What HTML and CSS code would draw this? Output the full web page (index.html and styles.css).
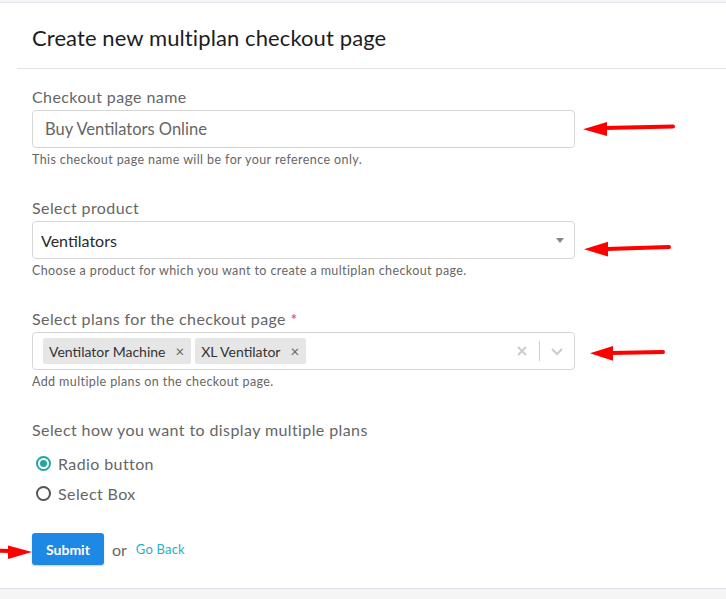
FILE: index.html
```html
<!DOCTYPE html>
<html lang="en">
<head>
    <meta charset="UTF-8">
    <title>Create new multiplan checkout page</title>
    <link rel="stylesheet" href="styles.css">
</head>
<body>

    <div class="page">
        <div class="panel">
            <div class="panel-header">
                <h1>Create new multiplan checkout page</h1>
            </div>

            <form class="panel-body">
                <div class="field">
                    <label>Checkout page name</label>
                    <input type="text" class="text-input" value="Buy Ventilators Online">
                    <p class="help">This checkout page name will be for your reference only.</p>
                </div>

                <div class="field">
                    <label>Select product</label>
                    <div class="select-box">
                        <span>Ventilators</span>
                        <span class="caret"></span>
                    </div>
                    <p class="help">Choose a product for which you want to create a multiplan checkout page.</p>
                </div>

                <div class="field">
                    <label>Select plans for the checkout page <span class="required">*</span></label>
                    <div class="multi-select">
                        <div class="tags">
                            <span class="tag">Ventilator Machine <span class="tag-x">&times;</span></span>
                            <span class="tag">XL Ventilator <span class="tag-x">&times;</span></span>
                        </div>
                        <div class="indicators">
                            <svg width="14" height="14" viewBox="0 0 14 14">
                                <path d="M3 3 L11 11 M11 3 L3 11" stroke="#cccccc" stroke-width="2" />
                            </svg>
                            <span class="sep"></span>
                            <svg width="14" height="14" viewBox="0 0 14 14">
                                <path d="M2 5 L7 10 L12 5" stroke="#cccccc" stroke-width="2" fill="none" />
                            </svg>
                        </div>
                    </div>
                    <p class="help">Add multiple plans on the checkout page.</p>
                </div>

                <div class="field">
                    <label>Select how you want to display multiple plans</label>
                    <div class="radio-row">
                        <span class="radio checked"></span> Radio button
                    </div>
                    <div class="radio-row">
                        <span class="radio"></span> Select Box
                    </div>
                </div>

                <div class="actions">
                    <button type="button" class="btn-submit">Submit</button>
                    <span class="or">or</span>
                    <a href="#" class="go-back">Go Back</a>
                </div>
            </form>
        </div>

        <!-- red annotation arrows -->
        <svg class="arrows" width="726" height="599" viewBox="0 0 726 599">
            <g fill="#ff0000" stroke="#ff0000" stroke-linecap="round">
                <line x1="604" y1="128" x2="673" y2="126.5" stroke-width="4" />
                <polygon points="583,129.3 607,122 607,136" stroke="none" />

                <line x1="606" y1="249" x2="669" y2="247" stroke-width="4" />
                <polygon points="584,249.3 608,241.7 608,256.5" stroke="none" />

                <line x1="611" y1="353" x2="663" y2="352" stroke-width="4" />
                <polygon points="590,353.3 613,346 613,360.7" stroke="none" />

                <line x1="-4" y1="550.5" x2="10" y2="551" stroke-width="4" />
                <polygon points="32,552 8,545.5 8,559" stroke="none" />
            </g>
        </svg>
    </div>

</body>
</html>
```

FILE: styles.css
```css
body {
    margin: 0;
    background-color: #f5f5f5;
    font-family: Lato, "Open Sans", Arial, sans-serif;
}

.page {
    position: relative;
    margin-top: 2px;
    height: 585px;
    background-color: #ffffff;
    border-top: 1px solid #dde3e8;
    border-bottom: 1px solid #dde3e8;
}

.panel {
    margin-left: 17px;
}

.panel-header {
    height: 62px;
    padding: 3px 0 0 15px;
    border-bottom: 1px solid #e2e5e8;
    display: flex;
    align-items: center;
}

.panel-header h1 {
    margin: 0;
    font-size: 22px;
    font-weight: 400;
    letter-spacing: 0.1px;
    color: #1d1d1d;
}

.panel-body {
    padding: 18px 15px 0;
    width: 543px;
}

.field {
    margin-bottom: 31px;
}

.field label {
    display: block;
    height: 20px;
    line-height: 20px;
    font-size: 16px;
    letter-spacing: 0.4px;
    color: #666666;
    margin-bottom: 3px;
}

.required {
    color: #e53935;
}

.text-input {
    box-sizing: border-box;
    display: block;
    width: 100%;
    height: 38px;
    padding: 0 12px;
    border: 1px solid #d6d6d6;
    border-radius: 4px;
    font-family: inherit;
    font-size: 16.5px;
    color: #666666;
    outline: none;
}

.help {
    margin: 5px 0 0;
    height: 14px;
    line-height: 14px;
    font-size: 12.5px;
    letter-spacing: 0.4px;
    color: #666666;
}

.select-box {
    box-sizing: border-box;
    height: 38px;
    padding: 0 10px 0 8px;
    border: 1px solid #d6d6d6;
    border-radius: 4px;
    display: flex;
    align-items: center;
    justify-content: space-between;
    font-size: 16px;
    color: #2a2a2a;
}

.caret {
    width: 0;
    height: 0;
    border-left: 4px solid transparent;
    border-right: 4px solid transparent;
    border-top: 5px solid #888888;
}

.multi-select {
    box-sizing: border-box;
    height: 38px;
    padding: 0 10px 0 10px;
    border: 1px solid #d6d6d6;
    border-radius: 4px;
    display: flex;
    align-items: center;
    justify-content: space-between;
}

.tags {
    display: flex;
    gap: 4px;
}

.tag {
    display: flex;
    align-items: center;
    height: 26px;
    padding: 0 7px 0 6px;
    background-color: #e6e6e6;
    border-radius: 2px;
    font-size: 14px;
    color: #333333;
}

.tag-x {
    margin-left: 10px;
    font-size: 15px;
    color: #666666;
}

.indicators {
    display: flex;
    align-items: center;
}

.indicators .sep {
    width: 1px;
    height: 20px;
    background-color: #cccccc;
    margin: 0 10px;
}

.radio-row {
    display: flex;
    align-items: center;
    height: 20px;
    margin-top: 13px;
    font-size: 16px;
    letter-spacing: 0.4px;
    color: #666666;
}

.radio-row + .radio-row {
    margin-top: 10px;
}

.radio {
    box-sizing: border-box;
    width: 15px;
    height: 15px;
    margin: 0 7px 0 4px;
    border: 2px solid #555555;
    border-radius: 50%;
    position: relative;
}

.radio.checked {
    border-color: #26a69a;
}

.radio.checked::after {
    content: '';
    position: absolute;
    top: 2px;
    left: 2px;
    width: 7px;
    height: 7px;
    border-radius: 50%;
    background-color: #26a69a;
}

.actions {
    display: flex;
    align-items: center;
    margin-top: -1px;
}

.btn-submit {
    height: 32px;
    padding: 0 14px;
    border: none;
    border-radius: 3px;
    background-color: #1e88e5;
    color: #ffffff;
    font-family: inherit;
    font-size: 14px;
    font-weight: 700;
    box-shadow: 0 1px 2px rgba(0, 0, 0, 0.2);
}

.or {
    margin-left: 8px;
    font-size: 16px;
    color: #666666;
}

.go-back {
    margin-left: 9px;
    font-size: 13px;
    letter-spacing: 0.2px;
    color: #1ab3c8;
    text-decoration: none;
}

.arrows {
    position: absolute;
    top: -3px;
    left: 0;
    pointer-events: none;
}
```
